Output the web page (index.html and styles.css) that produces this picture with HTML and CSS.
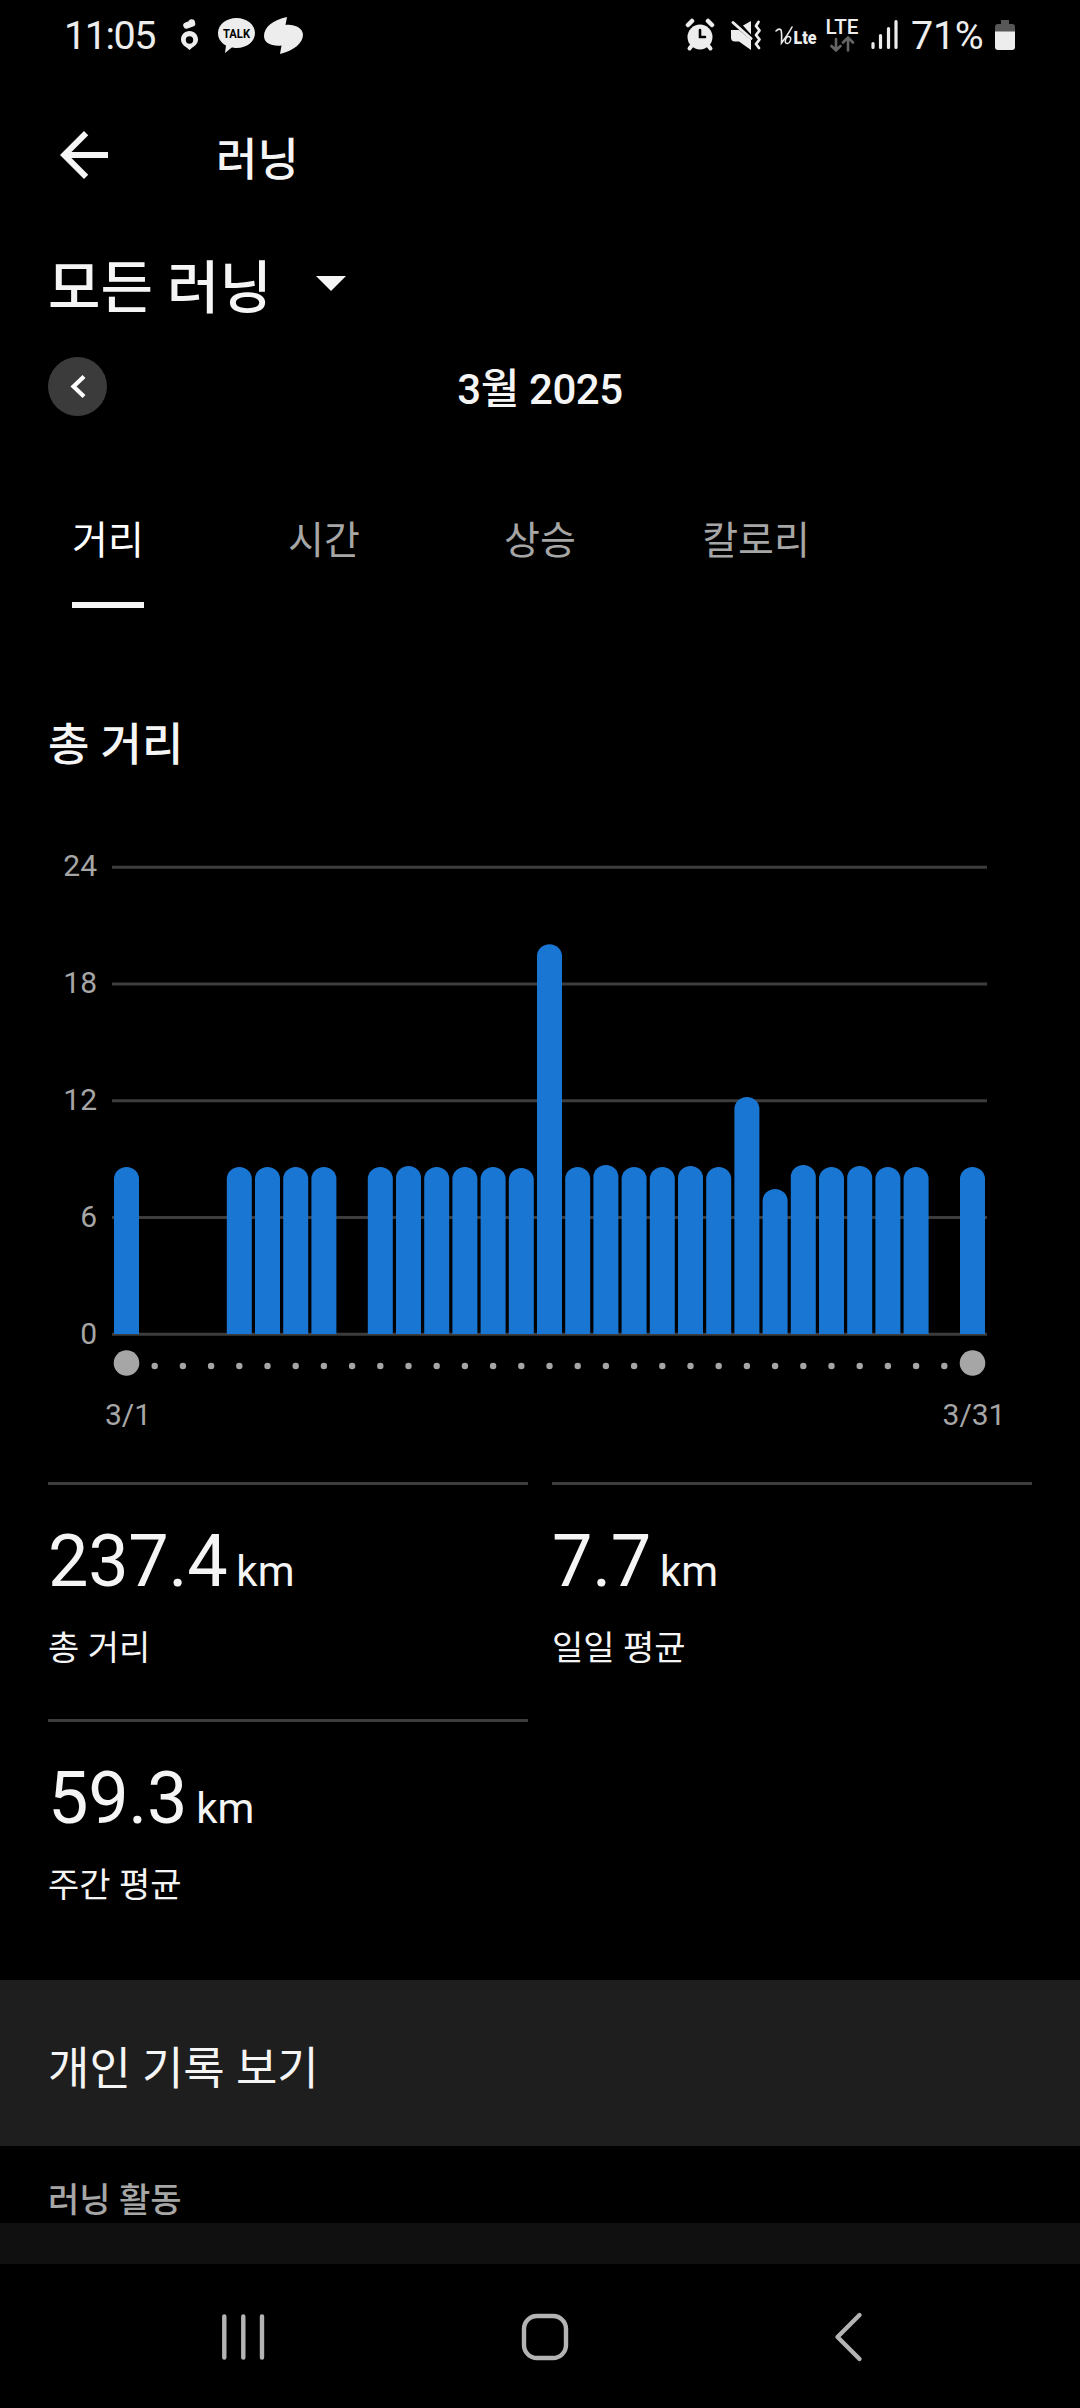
FILE: index.html
```html
<!DOCTYPE html>
<html lang="ko">
<head>
<meta charset="utf-8">
<title>러닝</title>
<link rel="stylesheet" href="styles.css">
</head>
<body>
<div class="screen">
  <div class="status">
    <span class="clock">11:05</span>
    <svg class="notif" width="128" height="44" viewBox="0 0 128 44" fill="#ededed">
      <path fill-rule="evenodd" d="M13.500 18C18.500 18 22 21.800 22 26.500C22 32 16.500 34 13.500 37C10.500 34 5 32 5 26.500C5 21.800 8.500 18 13.500 18ZM13.500 23.300A3.700 3.700 0 1 0 13.500 30.700A3.700 3.700 0 1 0 13.500 23.300Z"/>
      <path d="M10.500 12.500L16 10.500" stroke="#ededed" stroke-width="6.500" stroke-linecap="round"/>
      <circle cx="15.700" cy="9.500" r="3.200"/>
      <path d="M60.500 5C70.500 5 79 11.500 79 20C79 28.500 71 35 60.500 35C58.500 35 57 34.800 55.800 34.500L49 40L50 32.500C45 29.800 42 25.500 42 20C42 11.500 50.500 5 60.500 5Z"/>
      <text class="talk" x="47" y="25" textLength="27" lengthAdjust="spacingAndGlyphs">TALK</text>
      <path d="M111 4L109.500 12C118 11 126.500 14.500 127 21.500C127 30 118 37.500 104 41L105.500 32.500C96 33.500 88 30.500 88 23C88 14 97 7 111 4Z"/>
    </svg>
    <svg class="sys" width="222" height="44" viewBox="0 0 222 44" fill="#ededed">
      <g stroke="#ededed" stroke-linecap="round">
        <circle cx="15" cy="24" r="12.500" stroke="none"/>
        <path d="M3 12L7 8M23 8L27 12" stroke-width="4.500"/>
        <path d="M6.500 33L4.500 35.500M23.500 33L25.500 35.500" stroke-width="4"/>
        <path d="M15 17V24H20" fill="none" stroke="#000" stroke-width="2.600"/>
      </g>
      <path d="M46 17H54L66 27V37L54 28.500H50Q46 28.500 46 24.500Z"/>
      <path d="M58 12.500L66 8V21.500Z"/>
      <path d="M48 9.500L66 25.500" stroke="#ededed" stroke-width="3" stroke-linecap="round"/>
      <path d="M73.500 9L71 13L74.500 17.500L71 22L74.500 26.500L71 31L74 35" fill="none" stroke="#ededed" stroke-width="2.800" stroke-linecap="round" stroke-linejoin="round"/>
      <path d="M91 18Q94 15 96 17Q97 19 96.500 30Q104 20 107 14" fill="none" stroke="#ededed" stroke-width="1.600" stroke-linecap="round"/>
      <ellipse cx="103" cy="27" rx="2.500" ry="3.600" fill="none" stroke="#ededed" stroke-width="1.400" transform="rotate(20 103 27)"/>
      <text class="volte" x="108.500" y="31" textLength="23" lengthAdjust="spacingAndGlyphs">Lte</text>
      <text class="lte" x="140.500" y="20.500" textLength="33" lengthAdjust="spacingAndGlyphs">LTE</text>
      <path d="M151 26V37M146.500 33L151 37.500L155.500 33M163 37.500V25M158 29.500L163 24.500L168 29.500" fill="none" stroke="#666" stroke-width="2.600" stroke-linecap="round"/>
      <path d="M188 30.500V34.500M195.500 22.500V34.500M203.500 15.500V34.500M211 8.500V34.500" stroke="#ededed" stroke-width="3.200" stroke-linecap="round"/>
    </svg>
    <span class="percent">71%</span>
    <svg class="battery" width="22" height="32" viewBox="0 0 22 32">
      <path d="M7 1H15V5H18Q21 5 21 8V13H1V8Q1 5 4 5H7Z" fill="#575757"/>
      <path d="M1 12.500H21V28Q21 31 18 31H4Q1 31 1 28Z" fill="#ededed"/>
    </svg>
  </div>

  <header class="appbar">
    <svg width="72" height="72" viewBox="0 0 24 24" fill="#f5f5f5"><path d="M20 11H7.830l5.590-5.590L12 4l-8 8 8 8 1.410-1.410L7.830 13H20v-2z"/></svg>
    <h1>러닝</h1>
  </header>

  <div class="filter">
    <span class="filter-name">모든 러닝</span>
    <svg width="72" height="72" viewBox="0 0 24 24" fill="#f5f5f5"><path d="M7 10l5 5 5-5z"/></svg>
  </div>

  <div class="month">
    <span class="prev"><svg width="59" height="59" viewBox="0 0 59 59"><path d="M36 19.500L25.500 29.500L36 39.500" fill="none" stroke="#fff" stroke-width="4.200"/></svg></span>
    <span class="month-name">3월 2025</span>
    <span></span>
  </div>

  <nav class="tabs">
    <span class="tab active">거리</span>
    <span class="tab">시간</span>
    <span class="tab">상승</span>
    <span class="tab">칼로리</span>
  </nav>

  <h2 class="chart-title">총 거리</h2>
  <div class="chart">
    <div class="scale"><span>24</span><span>18</span><span>12</span><span>6</span><span>0</span></div>
    <svg class="plot" width="920" height="600" viewBox="100 850 920 600">
      <g class="grid"></g>
      <g class="bars"></g>
      <g class="dots"></g>
      <text class="day" x="128" y="1425" text-anchor="middle">3/1</text>
      <text class="day" x="974" y="1425" text-anchor="middle">3/31</text>
    </svg>
  </div>

  <div class="stats">
    <div class="stat"><div class="value">237.4<small>km</small></div><div class="label">총 거리</div></div>
    <div class="stat"><div class="value">7.7<small>km</small></div><div class="label">일일 평균</div></div>
    <div class="stat"><div class="value">59.3<small>km</small></div><div class="label">주간 평균</div></div>
  </div>

  <div class="records">개인 기록 보기</div>
  <div class="section">러닝 활동</div>
  <div class="row"></div>

  <footer class="navbar">
    <svg width="1080" height="144" viewBox="0 0 1080 144" fill="none" stroke="#b4b4b4" stroke-width="4.400" stroke-linecap="round" stroke-linejoin="round">
      <path d="M224.300 52.500V93.500M243.300 52.500V93.500M262 52.500V93.500"/>
      <rect x="524" y="52" width="42" height="42" rx="13"/>
      <path d="M859.500 51L837.500 73L859.500 95"/>
    </svg>
  </footer>
</div>
<script src="chart.js"></script>
</body>
</html>
```
FILE: styles.css
```css
* { box-sizing: border-box; margin: 0; padding: 0; }
body { background: #000; color: #f5f5f5; font-family: Roboto, "Noto Sans CJK KR", sans-serif; }
svg { display: block; flex: none; }
.screen { width: 1080px; height: 2408px; background: #000; display: flex; flex-direction: column; overflow: hidden; }

.status { height: 119px; padding: 13px 64px 0 64px; display: flex; align-items: flex-start; color: #ededed; flex: none; }
.clock, .percent { font-size: 39.500px; line-height: 46px; white-space: nowrap; flex: none; }
.clock { width: 112px; letter-spacing: -1.500px; }
.sys { margin-left: auto; }
.percent { width: 83px; margin-left: 4px; letter-spacing: -0.300px; }
.battery { margin: 6px 0 0 0; }
.talk { font: 700 12.500px Roboto, sans-serif; fill: #000; }
.volte { font: 900 18px Roboto, sans-serif; }
.lte { font: 500 20px Roboto, sans-serif; }

.appbar { height: 72px; padding-left: 48px; display: flex; align-items: center; gap: 96px; flex: none; }
h1 { font-size: 45px; line-height: 72px; font-weight: 500; padding-top: 12px; }

.filter { height: 166px; padding: 55px 0 0 48px; display: flex; gap: 23px; flex: none; }
.filter-name { font-size: 57px; line-height: 86px; font-weight: 500; white-space: nowrap; }

.month { height: 59px; padding: 0 48px; display: grid; grid-template-columns: 59px 1fr 59px; flex: none; }
.prev { width: 59px; height: 59px; border-radius: 50%; background: #3b3b3b; }
.month-name { text-align: center; font-size: 42px; line-height: 66px; font-weight: 500; letter-spacing: -0.400px; }

.tabs { margin-top: 92px; height: 100px; display: grid; grid-template-columns: repeat(5, 216px); justify-items: center; flex: none; }
.tab { height: 100px; font-size: 39px; line-height: 66px; color: #a6a6a6; }
.tab.active { color: #fff; border-bottom: 6px solid #f5f5f5; }

.chart-title { margin: 107px 0 0 48px; height: 62px; font-size: 45px; line-height: 62px; font-weight: 500; flex: none; }
.chart { margin-top: 73px; height: 600px; display: flex; flex: none; }
.scale { width: 100px; height: 499px; padding-right: 3px; display: flex; flex-direction: column; justify-content: space-between; text-align: right; color: #a6a6a6; font-size: 30px; line-height: 31px; }
.grid line { stroke: #3d3d3d; stroke-width: 3; }
.bars path { fill: #1976d2; }
.dots circle { fill: #a6a6a6; }
.day { font-size: 30px; fill: #a6a6a6; }

.stats { margin-top: 32px; height: 498px; padding: 0 48px; display: grid; grid-template-columns: 480px 480px; column-gap: 24px; grid-template-rows: 237px 237px; flex: none; }
.stat { border-top: 3px solid #3d3d3d; }
.value { padding-top: 33px; font-size: 72px; line-height: 88px; letter-spacing: -0.300px; white-space: nowrap; }
.value small { font-size: 42px; margin-left: 9px; letter-spacing: 0; }
.label { margin-top: 7px; font-size: 34px; line-height: 50px; }

.records { height: 166px; padding-left: 48px; background: #1e1e1e; font-size: 45px; line-height: 180px; flex: none; }
.section { height: 77px; padding: 29px 0 0 48px; font-size: 34px; line-height: 50px; font-weight: 500; color: #a6a6a6; flex: none; }
.row { height: 41px; background: #101010; flex: none; }
.navbar { height: 144px; flex: none; }
```
FILE: chart.js
```js
const NS = "http://www.w3.org/2000/svg";
const add = (group, tag, attrs) => {
  const el = document.createElementNS(NS, tag);
  for (const key in attrs) el.setAttribute(key, attrs[key]);
  document.querySelector(group).appendChild(el);
};

// Daily distance in km, 1 to 31 March
const km = [8.58, 0, 0, 0, 8.58, 8.58, 8.58, 8.58, 0, 8.58, 8.63, 8.58, 8.58, 8.58, 8.53,
  20.03, 8.58, 8.68, 8.58, 8.58, 8.63, 8.58, 12.18, 7.45, 8.68, 8.58, 8.63, 8.58, 8.58, 0, 8.58];
const base = 1334, unit = 116.75 / 6, pitch = 28.2, r = 12;

for (let i = 0; i < 5; i++) {
  const y = 867.3 + i * 116.75;
  add(".grid", "line", { x1: 112, x2: 987, y1: y, y2: y });
}
km.forEach((v, i) => {
  const x = 114 + i * pitch;
  if (v) {
    const top = base - v * unit;
    add(".bars", "path", { d: `M${x} ${base}V${top + r}A12.500 ${r} 0 0 1 ${x + 25} ${top + r}V${base}Z` });
  }
  const end = i === 0 || i === km.length - 1;
  add(".dots", "circle", { cx: x + 12.5, cy: end ? 1363 : 1366, r: end ? 12.8 : 3.2 });
});
```
